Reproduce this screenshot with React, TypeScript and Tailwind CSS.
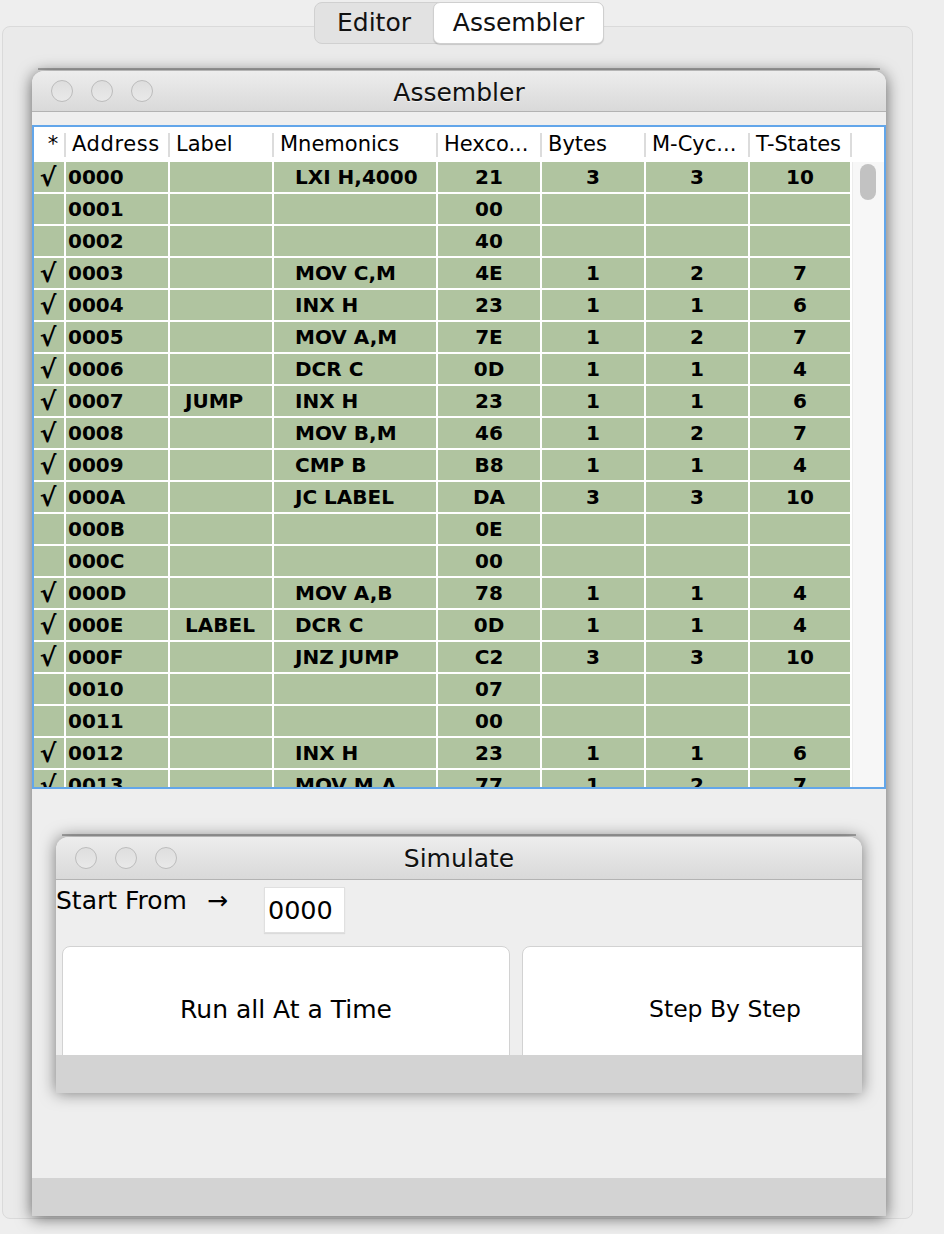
import React from "react";

type Row = {
  c: boolean;
  a: string;
  l?: string;
  m?: string;
  h: string;
  b?: string;
  mc?: string;
  t?: string;
};

const rows: Row[] = [
  { c: true, a: "0000", m: "LXI H,4000", h: "21", b: "3", mc: "3", t: "10" },
  { c: false, a: "0001", h: "00" },
  { c: false, a: "0002", h: "40" },
  { c: true, a: "0003", m: "MOV C,M", h: "4E", b: "1", mc: "2", t: "7" },
  { c: true, a: "0004", m: "INX H", h: "23", b: "1", mc: "1", t: "6" },
  { c: true, a: "0005", m: "MOV A,M", h: "7E", b: "1", mc: "2", t: "7" },
  { c: true, a: "0006", m: "DCR C", h: "0D", b: "1", mc: "1", t: "4" },
  { c: true, a: "0007", l: "JUMP", m: "INX H", h: "23", b: "1", mc: "1", t: "6" },
  { c: true, a: "0008", m: "MOV B,M", h: "46", b: "1", mc: "2", t: "7" },
  { c: true, a: "0009", m: "CMP B", h: "B8", b: "1", mc: "1", t: "4" },
  { c: true, a: "000A", m: "JC LABEL", h: "DA", b: "3", mc: "3", t: "10" },
  { c: false, a: "000B", h: "0E" },
  { c: false, a: "000C", h: "00" },
  { c: true, a: "000D", m: "MOV A,B", h: "78", b: "1", mc: "1", t: "4" },
  { c: true, a: "000E", l: "LABEL", m: "DCR C", h: "0D", b: "1", mc: "1", t: "4" },
  { c: true, a: "000F", m: "JNZ JUMP", h: "C2", b: "3", mc: "3", t: "10" },
  { c: false, a: "0010", h: "07" },
  { c: false, a: "0011", h: "00" },
  { c: true, a: "0012", m: "INX H", h: "23", b: "1", mc: "1", t: "6" },
  { c: true, a: "0013", m: "MOV M,A", h: "77", b: "1", mc: "2", t: "7" },
];

function Lights() {
  return (
    <div className="flex gap-[18px] pl-[19px]">
      {[0, 1, 2].map((i) => (
        <div
          key={i}
          className="w-[22px] h-[22px] rounded-full border border-[#bcbcbc] bg-gradient-to-b from-[#dedede] to-[#e9e9e9]"
        />
      ))}
    </div>
  );
}

function TitleBar({ title, h, pt }: { title: string; h: string; pt: string }) {
  return (
    <div
      className={`${h} relative flex items-center rounded-t-[12px] bg-gradient-to-b from-[#ededed] to-[#d9d9d9] border-b border-[#b3b3b3]`}
    >
      <Lights />
      <div
        className={`absolute inset-0 flex items-center justify-center ${pt} text-[25px] text-[#111] pointer-events-none [text-shadow:0_1px_0_rgba(255,255,255,0.6)]`}
      >
        {title}
      </div>
    </div>
  );
}

const headCell =
  "relative h-full flex items-center pl-[6px] text-[21px] text-black after:content-[''] after:absolute after:right-0 after:top-[6px] after:bottom-[5px] after:w-[2px] after:bg-[#dcdcdc]";

export default function App() {
  return (
    <div
      className="w-[944px] h-[1234px] bg-[#eeeeee] overflow-hidden"
      style={{ fontFamily: '"DejaVu Sans", Verdana, sans-serif' }}
    >
      {/* Tabs */}
      <div className="relative z-10 pt-[2px] pl-[314px]">
        <div className="flex w-[290px] h-[42px] rounded-[8px] border border-[#d0d0d0] bg-[#e2e2e2] text-[25px] text-[#111]">
          <div className="w-[118px] flex items-center justify-center">Editor</div>
          <div className="flex-1 flex items-center justify-center bg-white rounded-[7px] border border-[#cfcfcf] shadow-[0_1px_1px_rgba(0,0,0,0.15)] -my-px -mr-px">
            Assembler
          </div>
        </div>
      </div>

      {/* Tab pane */}
      <div className="-mt-[18px] ml-[2px] w-[911px] h-[1193px] rounded-[8px] border border-[#dadada] bg-[#eaeaea] pt-[41px] pl-[29px]">
        <div className="ml-[6px] w-[842px] h-[2px] bg-[#a9a9a9]" />
        {/* Assembler window */}
        <div className="mt-px w-[854px] h-[1145px] flex flex-col rounded-t-[12px] bg-[#eeeeee] shadow-[0_2px_16px_rgba(0,0,0,0.6)]">
          <TitleBar title="Assembler" h="h-[41px]" pt="pt-[4px]" />
          <div className="flex-1 flex flex-col">
            <div className="h-[13px] bg-[#efefef]" />
            {/* Table */}
            <div className="h-[664px] border-2 border-[#62a6ea] bg-white flex flex-col">
              <div className="h-[35px] flex bg-white">
                <div className={`${headCell} w-[32px] justify-center pl-0`}>*</div>
                <div className={`${headCell} w-[104px]`}>
                  <span className="tracking-[0.6px]">Address</span>
                </div>
                <div className={`${headCell} w-[104px]`}>Label</div>
                <div className={`${headCell} w-[164px]`}>Mnemonics</div>
                <div className={`${headCell} w-[104px]`}>Hexco...</div>
                <div className={`${headCell} w-[104px]`}>Bytes</div>
                <div className={`${headCell} w-[104px]`}>M-Cyc...</div>
                <div className={`${headCell} w-[102px]`}>T-States</div>
              </div>
              <div className="h-[625px] flex overflow-hidden">
                <div className="w-[818px] flex flex-col font-bold text-[20px] text-black">
                  {rows.map((r) => (
                    <div key={r.a} className="h-[32px] shrink-0 flex border-b-2 border-white bg-[#b0c4a0]">
                      <div className="w-[32px] border-r-2 border-white flex items-center justify-center text-[25px] leading-none pr-[2px]">
                        {r.c ? "√" : ""}
                      </div>
                      <div className="w-[104px] border-r-2 border-white flex items-center pl-[2px]">{r.a}</div>
                      <div className="w-[104px] border-r-2 border-white flex items-center pl-[15px]">{r.l ?? ""}</div>
                      <div className="w-[164px] border-r-2 border-white flex items-center pl-[21px]">{r.m ?? ""}</div>
                      <div className="w-[104px] border-r-2 border-white flex items-center justify-center">{r.h}</div>
                      <div className="w-[104px] border-r-2 border-white flex items-center justify-center">{r.b ?? ""}</div>
                      <div className="w-[104px] border-r-2 border-white flex items-center justify-center">{r.mc ?? ""}</div>
                      <div className="w-[102px] border-r-2 border-white flex items-center justify-center">{r.t ?? ""}</div>
                    </div>
                  ))}
                </div>
                <div className="w-[32px] bg-[#f7f7f7] border-l border-[#ececec] pt-[2px] pl-[7px]">
                  <div className="w-[16px] h-[36px] rounded-full bg-[#c2c2c2]" />
                </div>
              </div>
            </div>

            {/* Simulate area */}
            <div className="pt-[45px] pl-[24px]">
              <div className="ml-[6px] w-[794px] h-[2px] bg-[#adadad]" />
              <div className="mt-px w-[806px] h-[256px] flex flex-col rounded-t-[12px] bg-[#eeeeee] shadow-[0_0_16px_rgba(0,0,0,0.5)] overflow-hidden">
                <TitleBar title="Simulate" h="h-[43px] shrink-0" pt="pt-[2px]" />
                <div className="h-[66px] flex items-start">
                  <div className="mt-[6px] text-[25px] text-black leading-[30px] flex">
                    <span>Start From</span>
                    <span className="ml-[20px]">→</span>
                  </div>
                  <div className="ml-[36px] mt-[7px] w-[81px] h-[46px] bg-white border border-[#e0e0e0] shadow-[0_1px_1px_rgba(0,0,0,0.08)] flex items-center pl-[3px] text-[25.5px] text-black">
                    0000
                  </div>
                </div>
                <div className="h-[109px] flex overflow-hidden pl-[6px] gap-[12px]">
                  <div className="w-[448px] h-[130px] shrink-0 bg-white rounded-t-[8px] border border-[#d2d2d2] flex items-start justify-center pt-[44px] text-[25px] text-black">
                    Run all At a Time
                  </div>
                  <div className="w-[406px] h-[130px] shrink-0 bg-white rounded-t-[8px] border border-[#d2d2d2] flex items-start justify-center pt-[45px] text-[23.5px] text-black">
                    Step By Step
                  </div>
                </div>
                <div className="h-[38px] bg-[#d3d3d3]" />
              </div>
            </div>
            <div className="flex-1" />
            <div className="h-[38px] bg-[#d3d3d3]" />
          </div>
        </div>
      </div>
    </div>
  );
}
